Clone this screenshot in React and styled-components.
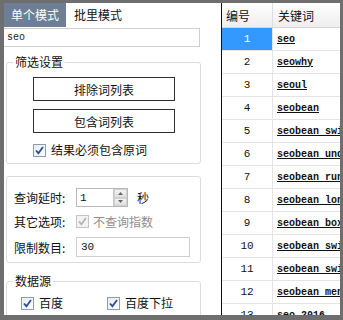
import styled, { createGlobalStyle } from "styled-components";

const GlobalStyle = createGlobalStyle`
  html, body { margin: 0; padding: 0; background: #6e6e6e; }
  * { box-sizing: border-box; }
`;

const CJK = `"Noto Sans CJK SC", "Noto Sans", sans-serif`;
const MONO = `"Liberation Mono", "DejaVu Sans Mono", monospace`;

const Frame = styled.div`
  width: 343px;
  height: 320px;
  background: #6e6e6e;
  padding: 3px 3px 5px 4px;
  display: flex;
  overflow: hidden;
  font-family: ${CJK};
  font-size: 12px;
  color: #111;
`;

const LeftPanel = styled.div`
  width: 217px;
  background: #fff;
  display: flex;
  flex-direction: column;
  overflow: hidden;
  & > * { flex-shrink: 0; }
`;

const Divider = styled.div`
  width: 1px;
  background: #111;
`;

const RightPanel = styled.div`
  flex: 1;
  background: #fff;
  overflow: hidden;
  display: flex;
  flex-direction: column;
`;

const TabBar = styled.div`
  display: flex;
  height: 24px;
  align-items: stretch;
`;

const Tab = styled.div`
  display: flex;
  align-items: center;
  padding: 0 7px;
  width: 62px;
  margin-right: ${(p) => (p.$active ? "1px" : "0")};
  background: ${(p) => (p.$active ? "#6e7f95" : "transparent")};
  color: ${(p) => (p.$active ? "#fff" : "#111")};
  font-size: 12px;
  line-height: 14px;
`;

const KeywordInput = styled.div`
  height: 19px;
  width: 196px;
  margin-top: 1px;
  border: 1px solid #cfcfcf;
  border-left: none;
  padding-left: 3px;
  font-family: ${MONO};
  font-size: 10px;
  display: flex;
  align-items: center;
  color: #222;
`;

const Group = styled.fieldset`
  margin: ${(p) => p.$mt || 0}px 20px 0 2px;
  padding: ${(p) => p.$pad || "0"};
  border: 1px solid #dcdcdc;
  border-radius: 3px;
  min-width: 0;
`;

const Legend = styled.legend`
  margin-left: 6px;
  padding: 0 2px;
  font-size: 12px;
  line-height: 14px;
  color: #111;
`;

const ButtonColumn = styled.div`
  display: flex;
  flex-direction: column;
  gap: 8px;
  padding-left: 26px;
`;

const Button = styled.div`
  width: 142px;
  height: 24px;
  border: 1px solid #2e2e2e;
  background: #fff;
  display: flex;
  align-items: center;
  justify-content: center;
  font-size: 12px;
`;

const CheckRow = styled.label`
  display: flex;
  align-items: center;
  gap: ${(p) => p.$gap || 5}px;
  color: ${(p) => (p.$disabled ? "#8e8e8e" : "#111")};
  font-size: 12px;
  line-height: 14px;
`;

const Box = styled.span`
  width: 13px;
  height: 13px;
  border: 1px solid ${(p) => (p.$disabled ? "#c4c4c4" : "#8d9cb0")};
  background: ${(p) =>
    p.$disabled ? "#f3f3f3" : "linear-gradient(135deg, #e6ebf2, #ffffff)"};
  display: flex;
  align-items: center;
  justify-content: center;
  flex-shrink: 0;
`;

const Check = ({ disabled }) => (
  <Box $disabled={disabled}>
    <svg width="9" height="9" viewBox="0 0 9 9">
      <path
        d="M1 4.5 L3.4 7.2 L8 1"
        fill="none"
        stroke={disabled ? "#b5b5b5" : "#2b4f93"}
        strokeWidth="1.8"
      />
    </svg>
  </Box>
);

const FormRow = styled.div`
  display: flex;
  align-items: center;
  height: ${(p) => p.$h || 23}px;
`;

const Label = styled.span`
  width: 69px;
  padding-left: 7px;
  font-size: 12px;
  flex-shrink: 0;
`;

const SpinBox = styled.div`
  width: 52px;
  height: 19px;
  border: 1px solid #b8b8b8;
  display: flex;
  align-items: stretch;
`;

const SpinText = styled.div`
  flex: 1;
  font-family: ${MONO};
  font-size: 11px;
  padding-left: 3px;
  display: flex;
  align-items: center;
`;

const SpinButtons = styled.div`
  width: 14px;
  display: flex;
  flex-direction: column;
  border-left: 1px solid #c8c8c8;
`;

const SpinHalf = styled.div`
  flex: 1;
  background: linear-gradient(#f4f4f4, #dedede);
  border: 1px solid #d0d0d0;
  display: flex;
  align-items: center;
  justify-content: center;
`;

const Unit = styled.span`
  margin-left: 9px;
`;

const TextBox = styled.div`
  width: 114px;
  height: 20px;
  border: 1px solid #cfcfcf;
  font-family: ${MONO};
  font-size: 11px;
  padding-left: 4px;
  display: flex;
  align-items: center;
`;

const SourceGrid = styled.div`
  display: grid;
  grid-template-columns: 86px 86px;
  row-gap: 5px;
  padding: 8px 0 0 14px;
`;

const Header = styled.div`
  display: flex;
  height: 25px;
  background: linear-gradient(#ffffff, #eeeeee);
  border-bottom: 1px solid #d6d6d6;
  flex-shrink: 0;
`;

const HeadCell = styled.div`
  width: ${(p) => (p.$num ? "51px" : "auto")};
  flex: ${(p) => (p.$num ? "none" : 1)};
  border-right: ${(p) => (p.$num ? "1px solid #dedede" : "none")};
  display: flex;
  align-items: center;
  padding-left: ${(p) => (p.$num ? "4px" : "5px")};
  font-size: 12px;
`;

const Row = styled.div`
  display: flex;
  height: 23px;
  border-bottom: 1px solid #e4e4e4;
  flex-shrink: 0;
`;

const NumCell = styled.div`
  width: 51px;
  border-right: 1px solid #e4e4e4;
  background: ${(p) => (p.$selected ? "#3399ff" : "#fff")};
  color: ${(p) => (p.$selected ? "#fff" : "#111")};
  display: flex;
  align-items: center;
  justify-content: center;
  font-family: ${MONO};
  font-size: 11px;
`;

const KeyCell = styled.div`
  flex: 1;
  display: flex;
  align-items: center;
  padding-left: 4px;
  font-family: ${MONO};
  font-size: 10px;
  font-weight: bold;
  text-decoration: underline;
  white-space: pre;
  overflow: hidden;
  color: #111;
`;

const keywords = [
  "seo",
  "seowhy",
  "seoul",
  "seobean",
  "seobean switch",
  "seobean underwear",
  "seobean running",
  "seobean long",
  "seobean boxer",
  "seobean switch m",
  "seobean swimwear",
  "seobean men",
  "seo 2016",
];

export default function App() {
  return (
    <>
      <GlobalStyle />
      <Frame>
        <LeftPanel>
          <TabBar>
            <Tab $active>单个模式</Tab>
            <Tab>批里模式</Tab>
          </TabBar>
          <KeywordInput>seo</KeywordInput>

          <Group $mt={8} $pad="8px 0 6px 0">
            <Legend>筛选设置</Legend>
            <ButtonColumn>
              <Button>排除词列表</Button>
              <Button>包含词列表</Button>
              <CheckRow style={{ marginTop: 2 }}>
                <Check />
                结果必须包含原词
              </CheckRow>
            </ButtonColumn>
          </Group>

          <Group $mt={12} $pad="10px 0 3px 0">
            <FormRow $h={21}>
              <Label>查询延时:</Label>
              <SpinBox>
                <SpinText>1</SpinText>
                <SpinButtons>
                  <SpinHalf>
                    <svg width="5" height="3" viewBox="0 0 5 3">
                      <path d="M0 3 L2.5 0 L5 3 Z" fill="#666" />
                    </svg>
                  </SpinHalf>
                  <SpinHalf>
                    <svg width="5" height="3" viewBox="0 0 5 3">
                      <path d="M0 0 L2.5 3 L5 0 Z" fill="#666" />
                    </svg>
                  </SpinHalf>
                </SpinButtons>
              </SpinBox>
              <Unit>秒</Unit>
            </FormRow>
            <FormRow $h={27}>
              <Label>其它选项:</Label>
              <CheckRow $disabled $gap={4}>
                <Check disabled />
                不查询指数
              </CheckRow>
            </FormRow>
            <FormRow $h={24}>
              <Label>限制数目:</Label>
              <TextBox>30</TextBox>
            </FormRow>
          </Group>

          <Group $mt={11} $pad="0 0 10px 0">
            <Legend>数据源</Legend>
            <SourceGrid>
              <CheckRow>
                <Check />
                百度
              </CheckRow>
              <CheckRow>
                <Check />
                百度下拉
              </CheckRow>
              <CheckRow>
                <Check />
                搜狗
              </CheckRow>
              <CheckRow>
                <Check />
                搜狗下拉
              </CheckRow>
            </SourceGrid>
          </Group>
        </LeftPanel>
        <Divider />
        <RightPanel>
          <Header>
            <HeadCell $num>编号</HeadCell>
            <HeadCell>关键词</HeadCell>
          </Header>
          {keywords.map((k, i) => (
            <Row key={i}>
              <NumCell $selected={i === 0}>{i + 1}</NumCell>
              <KeyCell>{k}</KeyCell>
            </Row>
          ))}
        </RightPanel>
      </Frame>
    </>
  );
}
